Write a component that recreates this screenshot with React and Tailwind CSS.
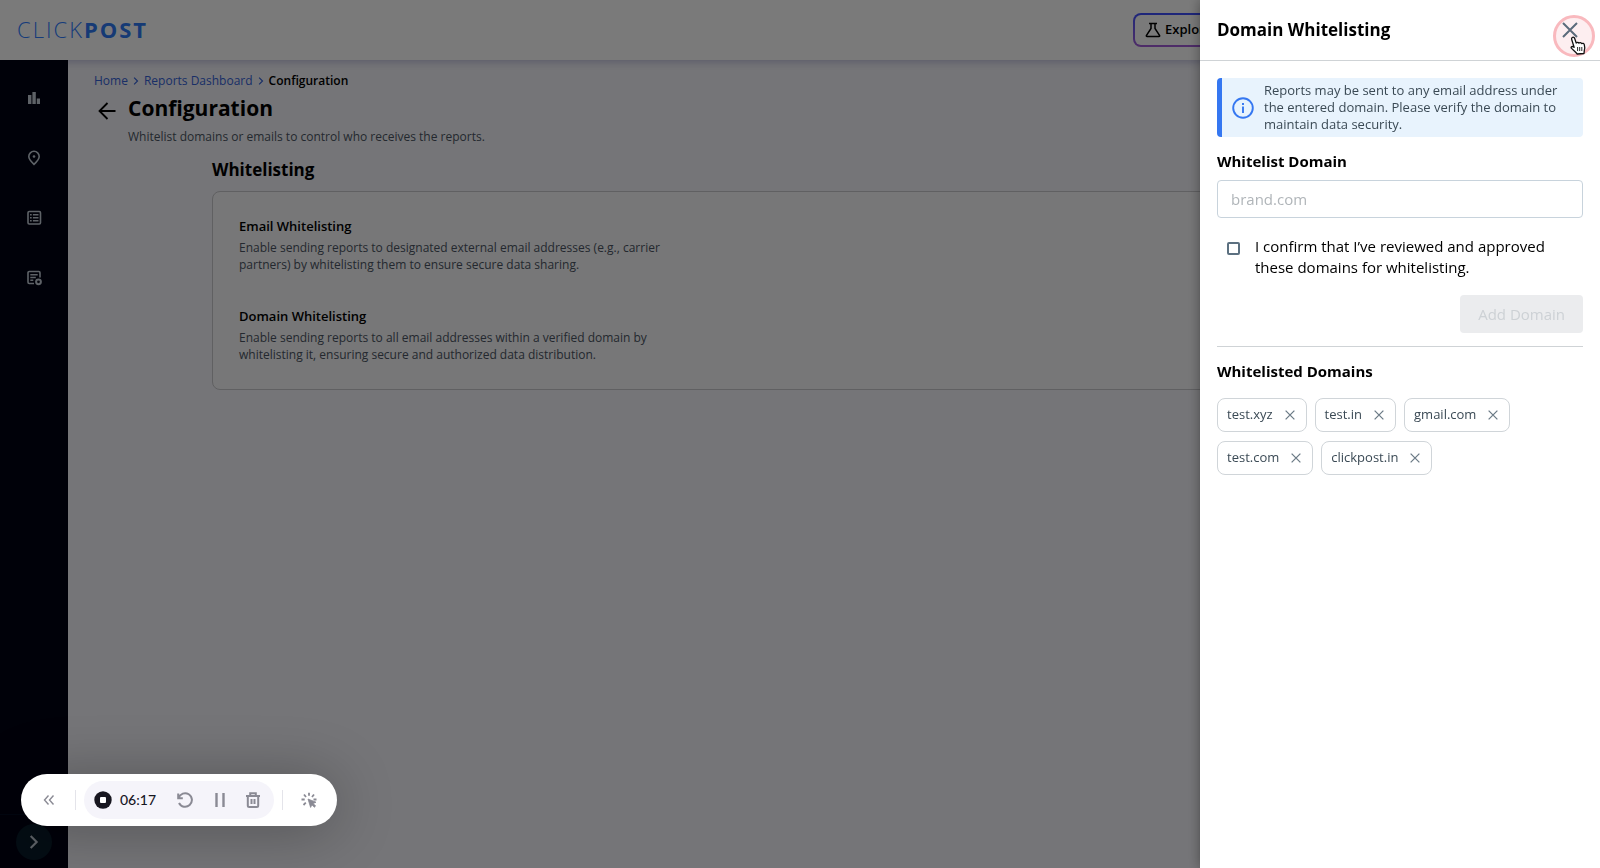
import React, { useState } from 'react';

const navItems = [
  { label: 'Analytics', icon: BarsIcon },
  { label: 'Tracking', icon: PinIcon },
  { label: 'Orders', icon: ListIcon },
  { label: 'Reports', icon: ReportIcon },
];

const options = [
  {
    title: 'Email Whitelisting',
    text: 'Enable sending reports to designated external email addresses (e.g., carrier partners) by whitelisting them to ensure secure data sharing.',
  },
  {
    title: 'Domain Whitelisting',
    text: 'Enable sending reports to all email addresses within a verified domain by whitelisting it, ensuring secure and authorized data distribution.',
  },
];

function BarsIcon() {
  return (
    <svg className="size-5" viewBox="0 0 20 20" fill="currentColor" aria-hidden="true">
      <path d="M4 7h3.4v9H4zM8.4 4h3.4v12H8.4zM12.8 10.500h3.200v5.500h-3.200z" />
    </svg>
  );
}

function PinIcon() {
  return (
    <svg className="size-5" viewBox="0 0 20 20" fill="none" stroke="currentColor" strokeWidth="1.6" aria-hidden="true">
      <path d="M10 16.300C6.600 13.200 4.800 10.800 4.800 8.500a5.200 5.200 0 0 1 10.400 0c0 2.300-1.800 4.700-5.200 7.800z" />
      <circle cx="10" cy="8.500" r="1.300" fill="currentColor" stroke="none" />
    </svg>
  );
}

function ListIcon() {
  return (
    <svg className="size-5" viewBox="0 0 20 20" fill="none" stroke="currentColor" strokeWidth="1.600" aria-hidden="true">
      <rect x="4" y="3.500" width="12.500" height="12.500" rx="1.200" />
      <path d="M6 6.700h1.700M6 9.700h1.700M6 12.700h1.700M8.900 6.700h5.600M8.900 9.700h5.600M8.900 12.700h5.600" />
    </svg>
  );
}

function ReportIcon() {
  return (
    <svg className="size-5" viewBox="0 0 20 20" fill="none" stroke="currentColor" strokeWidth="1.600" aria-hidden="true">
      <path d="M10 15.500H5.200A1.200 1.200 0 0 1 4 14.300V4.700A1.200 1.200 0 0 1 5.200 3.500h9.600A1.200 1.200 0 0 1 16 4.700V9.500" />
      <path d="M6.300 6.700h7.400M6.300 9.500h5.500M6.300 12.300h3" />
      <circle cx="14.500" cy="13.800" r="2.400" strokeWidth="2" />
    </svg>
  );
}

function Cross({ className }) {
  return (
    <svg className={className} viewBox="0 0 16 16" fill="none" stroke="currentColor" strokeWidth="2" aria-hidden="true">
      <path d="M1 1l14 14M15 1L1 15" />
    </svg>
  );
}

function Chevron({ className }) {
  return (
    <svg className={className} viewBox="0 0 8 12" fill="none" stroke="currentColor" strokeWidth="1.600" aria-hidden="true">
      <path d="M1.500 1.500L6 6l-4.500 4.500" />
    </svg>
  );
}

function Header() {
  return (
    <header className="relative z-10 flex h-15 items-center justify-between bg-white pl-[17px] pr-[303px] shadow-[0_2px_8px_#bdbddc]">
      <a href="#" className="pb-0.5 text-[22px] leading-none font-light tracking-[2px] text-[#2f7dff]">
        CLICK<span className="font-bold text-[#2f7af5]">POST</span>
      </a>
      <div className="rounded-lg bg-linear-to-b from-[#3b4fff] to-[#a55cd8] p-[2px]">
        <button type="button" className="flex h-[30px] w-40 items-center gap-1 rounded-md bg-white pl-2.5 text-[13px] font-semibold">
          <svg className="size-4" viewBox="0 0 16 16" fill="none" stroke="currentColor" strokeWidth="1.500" aria-hidden="true">
            <path d="M4 1.500h8M6 1.500v5L1.500 13.400q-.6 1.100.6 1.100h11.800q1.200 0 .6-1.100L10 6.500v-5" />
          </svg>
          Explore
        </button>
      </div>
    </header>
  );
}

function Sidebar() {
  return (
    <nav className="relative z-10 flex w-[68px] shrink-0 flex-col items-center justify-between bg-[#000314] text-[#c4ced8]" aria-label="Main">
      <div className="flex flex-col gap-10 pt-7">
        {navItems.map(({ label, icon: Icon }) => (
          <a key={label} href="#" aria-label={label}>
            <Icon />
          </a>
        ))}
      </div>
      <div className="flex w-full justify-center border-t border-[#060e22] pb-2 pt-[9px]">
        <button type="button" aria-label="Expand menu" className="flex size-9 items-center justify-center rounded-full bg-[#0a1c2a]">
          <Chevron className="h-4 w-3" />
        </button>
      </div>
    </nav>
  );
}

function Main() {
  return (
    <main className="flex-1 bg-[#f5f5fa] pt-3">
      <nav className="flex items-center gap-[5px] pl-[26px] text-xs leading-[18px]" aria-label="Breadcrumb">
        <a href="#" className="text-[#3563d8]">Home</a>
        <Chevron className="h-2.5 w-1.5 text-[#3563d8]" />
        <a href="#" className="text-[#3563d8]">Reports Dashboard</a>
        <Chevron className="h-2.5 w-1.5 text-[#3563d8]" />
        <span className="font-semibold">Configuration</span>
      </nav>
      <div className="flex gap-3 pl-[30px]">
        <button type="button" aria-label="Back" className="mt-3 flex size-[18px] items-center justify-center">
          <svg className="size-[18px]" viewBox="0 0 18 18" fill="none" stroke="currentColor" strokeWidth="1.800" aria-hidden="true">
            <path d="M17.500 9H2M9.500 1L1.500 9l8 8" />
          </svg>
        </button>
        <div>
          <h1 className="text-[21px] leading-9 font-bold">Configuration</h1>
          <p className="text-xs leading-[22px] text-[#4b5563]">Whitelist domains or emails to control who receives the reports.</p>
        </div>
      </div>
      <section className="px-36 pt-2.5">
        <h2 className="text-[17px] leading-6 font-bold">Whitelisting</h2>
        <div className="mt-[9px] flex flex-col gap-8 rounded-lg border border-[#c8c8cc] bg-[#f8f8fa] px-[26px] pt-[23px] pb-[26px]">
          {options.map((option) => (
            <div key={option.title}>
              <h3 className="text-[13px] leading-[22px] font-semibold">{option.title}</h3>
              <p className="mt-0.5 max-w-[430px] text-xs leading-[17px] text-[#4b5563]">{option.text}</p>
            </div>
          ))}
        </div>
      </section>
    </main>
  );
}

function Drawer() {
  const [domains, setDomains] = useState(['test.xyz', 'test.in', 'gmail.com', 'test.com', 'clickpost.in']);

  return (
    <aside role="dialog" aria-labelledby="drawer-title" className="fixed inset-y-0 right-0 z-30 w-[400px] bg-white shadow-[0_0_12px_#00000066]">
      <div className="flex h-[61px] items-center justify-between border-b border-[#cfd3d6] pl-[17px] pr-[22px]">
        <h2 id="drawer-title" className="text-[17px] leading-6 font-bold">Domain Whitelisting</h2>
        <div className="relative flex">
          {/* click highlight and pointer */}
          <span className="pointer-events-none absolute -top-[7px] -left-[9px] size-[42px] rounded-full border-3 border-[#f9b9be] bg-[#fdeef0]" />
          <button type="button" aria-label="Close" className="relative text-[#5b6b7b]">
            <Cross className="size-4" />
          </button>
          <svg className="pointer-events-none absolute top-[14px] left-2 h-[19px] w-4" viewBox="0 0 16 19" fill="#fff" stroke="#111" strokeWidth="1.300" strokeLinejoin="round" aria-hidden="true">
            <path d="M2.200 1.500C3.300.8 4.300 1.300 4.700 2.500L6.200 7C7 6 8.400 6.100 8.900 7.100 9.900 6.200 11.100 6.500 11.600 7.600 12.700 7 14 7.500 14.300 8.700 14.900 11 15.100 12.500 14.300 14.600L14 17.500 7.200 18C5.500 15.700 3.500 14.300 1.600 12.400.3 11 1.800 9.600 4.100 11.300L1.700 3.500Q1.300 2.200 2.200 1.500z" />
            <path d="M7.600 11v4M9.700 11v4M11.800 11v4" strokeWidth=".9" />
          </svg>
        </div>
      </div>

      <div className="px-[17px] pt-[17px]">
        <div className="flex items-center rounded border-l-5 border-[#3577f1] bg-[#e8f3fd] py-1 pl-2.5 pr-5">
          <svg className="size-[22px] shrink-0 text-[#3577f1]" viewBox="0 0 22 22" fill="none" stroke="currentColor" strokeWidth="1.900" aria-hidden="true">
            <circle cx="11" cy="11" r="9.800" />
            <path d="M11 9.500v6.500M11 6v2" />
          </svg>
          <p className="ml-2.5 text-[13px] leading-[17px] text-[#3b4a55]">
            Reports may be sent to any email address under the entered domain. Please verify the domain to maintain data security.
          </p>
        </div>

        <form onSubmit={(e) => e.preventDefault()}>
          <label htmlFor="domain" className="mt-3 block text-[15px] leading-6 font-bold">Whitelist Domain</label>
          <input
            id="domain"
            type="text"
            placeholder="brand.com"
            className="mt-[7px] block h-[38px] w-full rounded border border-[#c8d3dc] px-[13px] text-[15px] outline-none placeholder:text-[#b0b5b9]"
          />
          <div className="mt-[18px] flex gap-[15px] pl-2.5">
            <input
              id="confirm"
              type="checkbox"
              className="mt-1.5 size-[13px] shrink-0 appearance-none rounded-xs border-2 border-[#5c7080] bg-white checked:bg-[#3577f1]"
            />
            <label htmlFor="confirm" className="text-[15px] leading-[21px]">
              I confirm that I’ve reviewed and approved these domains for whitelisting.
            </label>
          </div>
          <div className="mt-[17px] flex justify-end border-b border-[#cfd3d6] pb-[13px]">
            <button type="submit" disabled className="h-[38px] rounded bg-[#ebecee] px-[18px] text-[15px] font-medium text-[#cdd1d5]">
              Add Domain
            </button>
          </div>
        </form>

        <h3 className="mt-3 text-[15px] leading-6 font-bold">Whitelisted Domains</h3>
        <ul className="mt-[15px] flex flex-wrap gap-x-2 gap-y-[9px]">
          {domains.map((domain) => (
            <li key={domain} className="flex h-[34px] items-center gap-3 rounded-lg border border-[#d0d5d9] pl-[9px] pr-[11px] text-[13px] text-[#3b4a55]">
              {domain}
              <button
                type="button"
                aria-label={`Remove ${domain}`}
                className="text-[#6b7a86]"
                onClick={() => setDomains(domains.filter((d) => d !== domain))}
              >
                <Cross className="size-2.5" />
              </button>
            </li>
          ))}
        </ul>
      </div>
    </aside>
  );
}

function RecorderBar() {
  return (
    <div className="fixed bottom-[42px] left-[21px] z-40 flex h-[52px] items-center rounded-full bg-white pl-[22px] pr-5 text-[#8a8a94] shadow-[0_4px_60px_#0000004d]">
      <button type="button" aria-label="Collapse">
        <svg className="size-3" viewBox="0 0 12 12" fill="none" stroke="currentColor" strokeWidth="1.400" aria-hidden="true">
          <path d="M5.500 1.500L1.500 6l4 4.500M10.500 1.500L6.500 6l4 4.500" />
        </svg>
      </button>
      <span className="ml-5 h-5 w-px bg-[#e4e4ea]" />
      <div className="mx-2 flex h-[38px] items-center rounded-full bg-[#f5f4fa] pl-2.5 pr-[14px]">
        <button type="button" aria-label="Stop recording">
          <svg className="size-[18px]" viewBox="0 0 18 18" aria-hidden="true">
            <circle cx="9" cy="9" r="8.700" fill="#17161f" />
            <rect x="6" y="6" width="6" height="6" rx="1" fill="#fff" />
          </svg>
        </button>
        <span className="ml-2 w-[49px] font-['Lato',sans-serif] text-sm font-medium text-[#17161f]">06:17</span>
        <button type="button" aria-label="Restart" className="ml-2">
          <svg className="size-4" viewBox="0 0 16 16" fill="none" stroke="currentColor" strokeWidth="2" aria-hidden="true">
            <path d="M1.200 1.500v4.700h4.600M1.600 6A6.800 6.800 0 1 1 2 11" />
          </svg>
        </button>
        <button type="button" aria-label="Pause" className="ml-[22px]">
          <svg className="h-4 w-2.5" viewBox="0 0 10 16" fill="none" stroke="currentColor" strokeWidth="2.400" aria-hidden="true">
            <path d="M1.500 1v14M8.500 1v14" />
          </svg>
        </button>
        <button type="button" aria-label="Delete" className="ml-[21px]">
          <svg className="h-4 w-3.5" viewBox="0 0 14 16" fill="none" stroke="currentColor" strokeWidth="2" aria-hidden="true">
            <path d="M0 4h14M4.200 4V1.200h5.600V4M1.800 4v9.500q0 1.500 1.500 1.500h7.400q1.500 0 1.500-1.500V4M5.500 7v5M8.500 7v5" />
          </svg>
        </button>
      </div>
      <span className="mr-[18px] h-5 w-px bg-[#e4e4ea]" />
      <button type="button" aria-label="Highlight clicks">
        <svg className="size-4" viewBox="0 0 16 16" fill="none" stroke="currentColor" strokeWidth="1.800" aria-hidden="true">
          <path d="M8 .8v3M3 2.500l2 2.500M.500 7.500h3.200M2.500 13l2.300-2.300M13 2.500l-2 2.500M12.500 7.500h3" />
          <path d="M7 7l8 3.200-2.800 1.300 2.400 2.500-1.200 1.200-2.500-2.400-1.300 2.600z" fill="currentColor" strokeWidth=".8" />
        </svg>
      </button>
    </div>
  );
}

export default function App() {
  return (
    <div className="flex min-h-screen flex-col font-['Open_Sans',sans-serif] text-black">
      <Header />
      <div className="flex flex-1">
        <Sidebar />
        <Main />
      </div>
      <div className="fixed inset-0 z-20 bg-black/52" />
      <Drawer />
      <RecorderBar />
    </div>
  );
}
